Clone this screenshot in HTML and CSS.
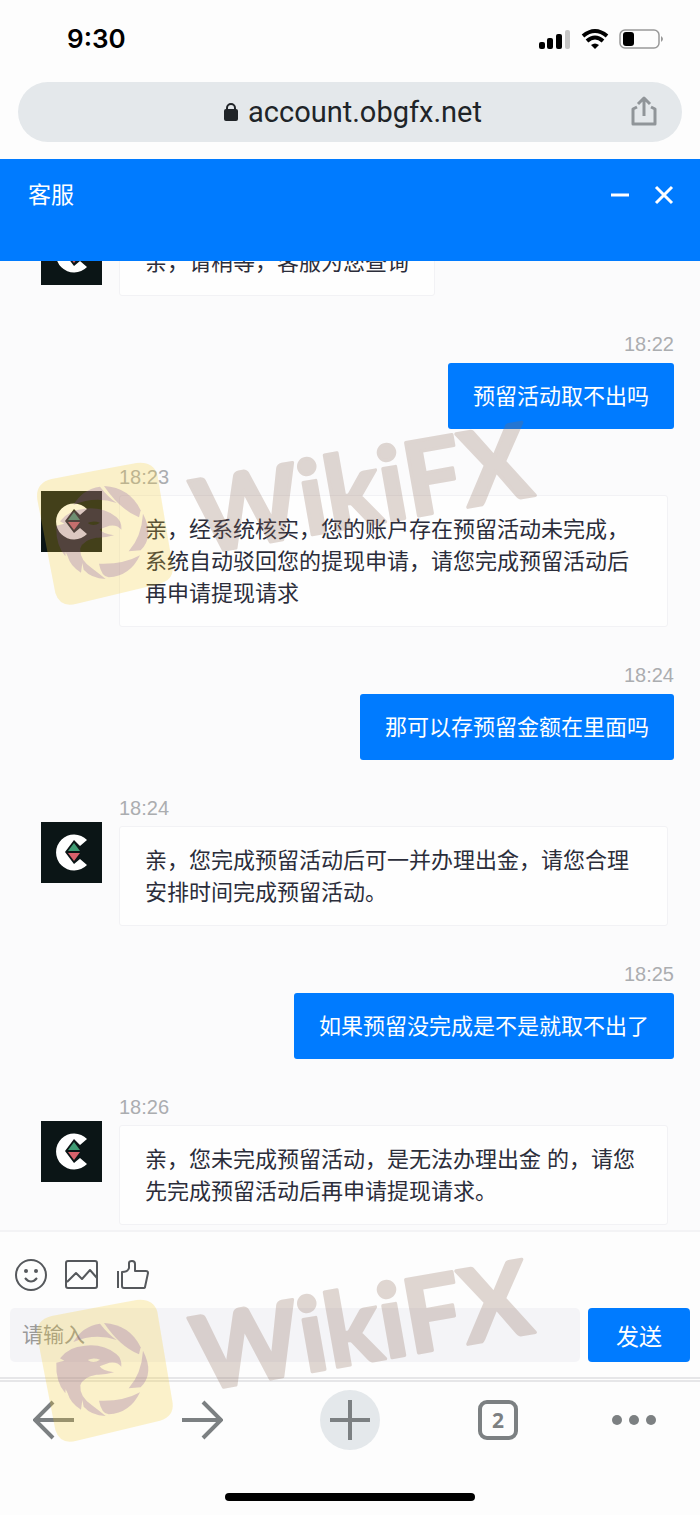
FILE: index.html
```html
<!DOCTYPE html>
<html lang="zh-CN">
<head>
<meta charset="utf-8">
<meta name="viewport" content="width=device-width, initial-scale=1">
<title>客服</title>
<link rel="stylesheet" href="styles.css">
</head>
<body>
<svg class="defs" aria-hidden="true">
  <symbol id="avatar" viewBox="0 0 61 61">
    <rect width="61" height="61" fill="#0b1516"/>
    <path d="M46 18A18 18 0 1 0 46 43L39 37L33 42L24 30L33 18L39 24Z" fill="#fff"/>
    <path d="M33 21L39 29H27Z" fill="#3f9c74"/>
    <path d="M27 31H39L33 39Z" fill="#d8616b"/>
  </symbol>
  <symbol id="mark" viewBox="0 0 1650 720">
    <path d="M95 258Q240 230 350 210Q400 205 412 245L458 520Q462 560 420 572L170 632Q120 645 106 600L52 320Q45 270 95 258Z" fill="#f8cb28" fill-opacity=".24"/>
    <g fill="#7e4fa2" fill-opacity=".26">
      <path d="M160 336Q188 288 240 281Q266 314 290 330Q225 308 160 336Z"/>
      <path d="M252 279Q330 284 362 352L357 373Q300 350 252 279Z"/>
      <path d="M369 362Q404 430 362 472L326 475Q365 430 369 362Z"/>
      <path d="M237 512Q310 515 360 487Q330 550 266 553Q244 550 237 512Z"/>
      <path fill-rule="evenodd" d="M120 385Q145 350 195 347Q250 341 289 372Q306 386 304 410Q292 394 268 398L239 409Q247 422 282 427Q255 435 229 434Q190 440 181 466Q178 500 216 526Q237 542 257 558Q214 556 191 530L187 510L183 539Q151 520 143 490L137 478L136 490Q106 455 109 398L133 392ZM203 390Q220 403 240 389Q220 381 203 390Z"/>
    </g>
    <text class="mark-text" x="540" y="484" transform="rotate(-10 540 484)">WikiFX</text>
  </symbol>
</svg>

<div class="screen">
  <header class="browser">
    <div class="status">
      <time class="clock">9:30</time>
      <svg class="signals" viewBox="0 0 126 24" role="img" aria-label="信号、无线网络、电量">
        <rect x="1" y="15" width="6" height="7" rx="2"/><rect x="9" y="11" width="6" height="11" rx="2"/><rect x="18" y="7" width="6" height="15" rx="2"/><rect x="27" y="3" width="5" height="19" rx="2" fill="#c6c6c6"/>
        <g fill="none" stroke="#000" stroke-width="4"><path d="M45 9Q57-1 69 9"/><path d="M49 14Q57 7 65 14"/></g><path d="M53 18Q57 15 61 18L57 22Z"/>
        <rect x="82" y="3" width="39" height="18" rx="5" fill="none" stroke="#999" stroke-width="1.5"/><rect x="85" y="5" width="11" height="14" rx="3"/><path d="M123 9Q127 12 123 15Z" fill="#999"/>
      </svg>
    </div>
    <div class="address">
      <svg class="lock" viewBox="0 0 14 18" aria-hidden="true"><rect y="6" width="14" height="12" rx="2" fill="#202428"/><path d="M3 7V5a4 4 0 0 1 8 0V7" fill="none" stroke="#202428" stroke-width="2"/></svg>
      <span>account.obgfx.net</span>
      <button class="share" type="button" aria-label="分享"><svg viewBox="0 0 26 32" fill="none" stroke="#909599" stroke-width="3"><path d="M6 12L2 14V29H24V14L20 12M13 21V3M7 9L13 3L19 9" stroke-linejoin="round"/></svg></button>
    </div>
  </header>

  <section class="titlebar">
    <h1>客服</h1>
    <div class="window-actions">
      <button type="button" aria-label="最小化"><svg viewBox="0 0 20 20"><path d="M1 10H19"/></svg></button>
      <button type="button" aria-label="关闭"><svg viewBox="0 0 20 20"><path d="M2 2L18 18M18 2L2 18"/></svg></button>
    </div>
  </section>

  <main class="chat">
    <article class="msg agent"><svg class="avatar"><use href="#avatar"/></svg><div class="body untimed"><p>亲，请稍等，客服为您查询</p></div></article>
    <article class="msg mine"><time>18:22</time><p>预留活动取不出吗</p></article>
    <article class="msg agent"><svg class="avatar"><use href="#avatar"/></svg><div class="body"><time>18:23</time><p>亲，经系统核实，您的账户存在预留活动未完成，系统自动驳回您的提现申请，请您完成预留活动后再申请提现请求</p></div></article>
    <article class="msg mine"><time>18:24</time><p>那可以存预留金额在里面吗</p></article>
    <article class="msg agent"><svg class="avatar"><use href="#avatar"/></svg><div class="body"><time>18:24</time><p>亲，您完成预留活动后可一并办理出金，请您合理安排时间完成预留活动。</p></div></article>
    <article class="msg mine"><time>18:25</time><p>如果预留没完成是不是就取不出了</p></article>
    <article class="msg agent"><svg class="avatar"><use href="#avatar"/></svg><div class="body"><time>18:26</time><p>亲，您未完成预留活动，是无法办理出金 的，请您先完成预留活动后再申请提现请求。</p></div></article>
  </main>

  <form class="composer">
    <div class="tools">
      <button type="button" aria-label="表情"><svg viewBox="0 0 34 34"><circle cx="17" cy="17" r="15"/><path d="M11 20Q17 27 23 20"/><g fill="#55585c" stroke="none"><circle cx="12" cy="13" r="2"/><circle cx="22" cy="13" r="2"/></g></svg></button>
      <button type="button" aria-label="图片"><svg viewBox="0 0 34 34"><rect x="1" y="3" width="31" height="27" rx="2"/><path d="M2 24L11 15L17 21L25 12L32 20"/></svg></button>
      <button type="button" aria-label="点赞"><svg viewBox="0 0 34 34"><path d="M2 13V30M6 14Q12 14 13 10V5Q13 3 16 3Q19 3 19 6V13H30Q32 13 32 15L29 29Q29 30 27 30H8Q6 30 6 28Z"/></svg></button>
    </div>
    <div class="entry">
      <input type="text" placeholder="请输入" aria-label="请输入">
      <button class="send" type="button">发送</button>
    </div>
  </form>

  <nav class="toolbar" aria-label="浏览器">
    <button type="button" aria-label="后退"><svg viewBox="0 0 42 42"><path d="M41 21H3M20 3L2 21L20 39"/></svg></button>
    <button type="button" aria-label="前进"><svg viewBox="0 0 42 42"><path d="M1 21H39M22 3L40 21L22 39"/></svg></button>
    <button class="add" type="button" aria-label="新标签页"><svg viewBox="0 0 42 42"><path d="M1 21H41M21 1V41"/></svg></button>
    <button class="tabs" type="button" aria-label="标签页"><span>2</span></button>
    <button type="button" aria-label="更多"><svg class="dots" viewBox="0 0 44 10"><circle cx="5" cy="5" r="5"/><circle cx="22" cy="5" r="5"/><circle cx="39" cy="5" r="5"/></svg></button>
  </nav>
  <div class="home"></div>

  <svg class="mark mark-upper" aria-hidden="true"><use href="#mark"/></svg>
  <svg class="mark mark-lower" aria-hidden="true"><use href="#mark"/></svg>
</div>
</body>
</html>
```
FILE: styles.css
```css
* { box-sizing: border-box; }
body {
  margin: 0;
  background: #fdfdfd;
  color: #2b2d3a;
  font-family: "Liberation Sans", "Noto Sans CJK SC", sans-serif;
}
h1, p { margin: 0; }
button {
  display: flex;
  align-items: center;
  justify-content: center;
  margin: 0;
  padding: 0;
  border: 0;
  background: none;
  font: inherit;
}
.defs { position: absolute; width: 0; height: 0; }
.screen {
  position: relative;
  display: flex;
  flex-direction: column;
  min-height: 100vh;
  overflow: hidden;
}

.browser { padding: 0 18px 17px; }
.status {
  display: flex;
  align-items: center;
  justify-content: space-between;
  height: 82px;
  padding: 0 18px 4px 49px;
}
.clock { font: 600 26px/32px Inter, sans-serif; color: #000; }
.signals { width: 126px; height: 24px; }
.address {
  position: relative;
  display: flex;
  align-items: center;
  justify-content: center;
  gap: 10px;
  height: 60px;
  padding-left: 6px;
  border-radius: 30px;
  background: #e4e8eb;
  color: #202428;
  font: 29px/36px Roboto, sans-serif;
}
.lock { width: 14px; height: 18px; }
.share { position: absolute; right: 25px; top: 13px; }
.share svg { width: 26px; height: 32px; }

.titlebar {
  display: flex;
  justify-content: space-between;
  height: 102px;
  padding: 20px 26px 0 28px;
  background: #007bff;
  color: #fff;
}
.titlebar h1 { font-size: 23px; font-weight: 400; line-height: 32px; }
.window-actions { display: flex; gap: 24px; height: 32px; }
.window-actions svg {
  width: 20px;
  height: 20px;
  fill: none;
  stroke: #fff;
  stroke-width: 3;
}

.chat {
  display: flex;
  flex: 1 0 0;
  flex-direction: column;
  justify-content: flex-end;
  gap: 38px;
  min-height: 0;
  padding: 0 26px 5px 41px;
  overflow: hidden;
  background: #fbfbfc;
}
.msg { display: flex; flex: none; }
.msg time { color: #abadb0; font-size: 20px; line-height: 20px; }
.msg p { font-size: 22px; line-height: 32px; }
.agent { gap: 17px; padding-right: 6px; }
.avatar { flex: none; width: 61px; height: 61px; margin-top: 24px; }
.body {
  display: flex;
  flex-direction: column;
  align-items: flex-start;
  gap: 8px;
}
.untimed { padding-top: 28px; }
.agent p {
  padding: 18px 25px 16px;
  border: 1px solid #f2f2f5;
  border-radius: 3px;
  background: #fefefe;
}
.mine { flex-direction: column; align-items: flex-end; gap: 9px; }
.mine p {
  padding: 18px 25px 16px;
  border-radius: 3px;
  background: #007bff;
  color: #fff;
}

.composer { border-top: 2px solid #f3f3f5; }
.tools { display: flex; gap: 17px; padding: 26px 14px 16px; }
.tools svg {
  width: 34px;
  height: 34px;
  fill: none;
  stroke: #55585c;
  stroke-width: 2;
  stroke-linejoin: round;
}
.entry { display: flex; gap: 8px; padding: 0 10px 15px; }
.entry input {
  flex: 1;
  min-width: 0;
  height: 54px;
  padding: 0 12px;
  border: 0;
  border-radius: 5px;
  background: #f4f4f7;
  color: #2b2d3a;
  font: inherit;
  font-size: 21px;
}
.entry input::placeholder { color: #999; opacity: 1; }
.send {
  width: 102px;
  height: 54px;
  border-radius: 4px;
  background: #007bff;
  color: #fff;
  font-size: 23px;
}

.toolbar {
  display: grid;
  grid-template-columns: 108fr 188fr 108fr 188fr 84fr;
  align-items: center;
  justify-items: center;
  height: 84px;
  padding: 0 24px 4px 0;
  border-top: 5px double #e6e6e8;
}
.toolbar svg {
  width: 42px;
  height: 42px;
  fill: none;
  stroke: #7c8082;
  stroke-width: 4;
}
.toolbar .dots { width: 44px; height: 10px; fill: #7c8082; stroke: none; }
.add { width: 60px; height: 60px; border-radius: 50%; background: #e4e8eb; }
.tabs {
  width: 40px;
  height: 40px;
  border: 4px solid #7c8082;
  border-radius: 9px;
  color: #7c8082;
  font: 700 21px/24px "Noto Sans", sans-serif;
}
.home {
  width: 250px;
  height: 8px;
  margin: 32px auto 14px;
  border-radius: 4px;
  background: #000;
}

.mark {
  position: absolute;
  left: 20px;
  width: 550px;
  height: 240px;
  pointer-events: none;
}
.mark-upper { top: 393px; }
.mark-lower { bottom: 45px; }
.mark-text {
  fill: #8c6a58;
  stroke: #8c6a58;
  stroke-width: 10px;
  stroke-linejoin: round;
  opacity: .26;
  font-family: Lato, sans-serif;
  font-size: 308px;
  font-weight: 700;
}
```
